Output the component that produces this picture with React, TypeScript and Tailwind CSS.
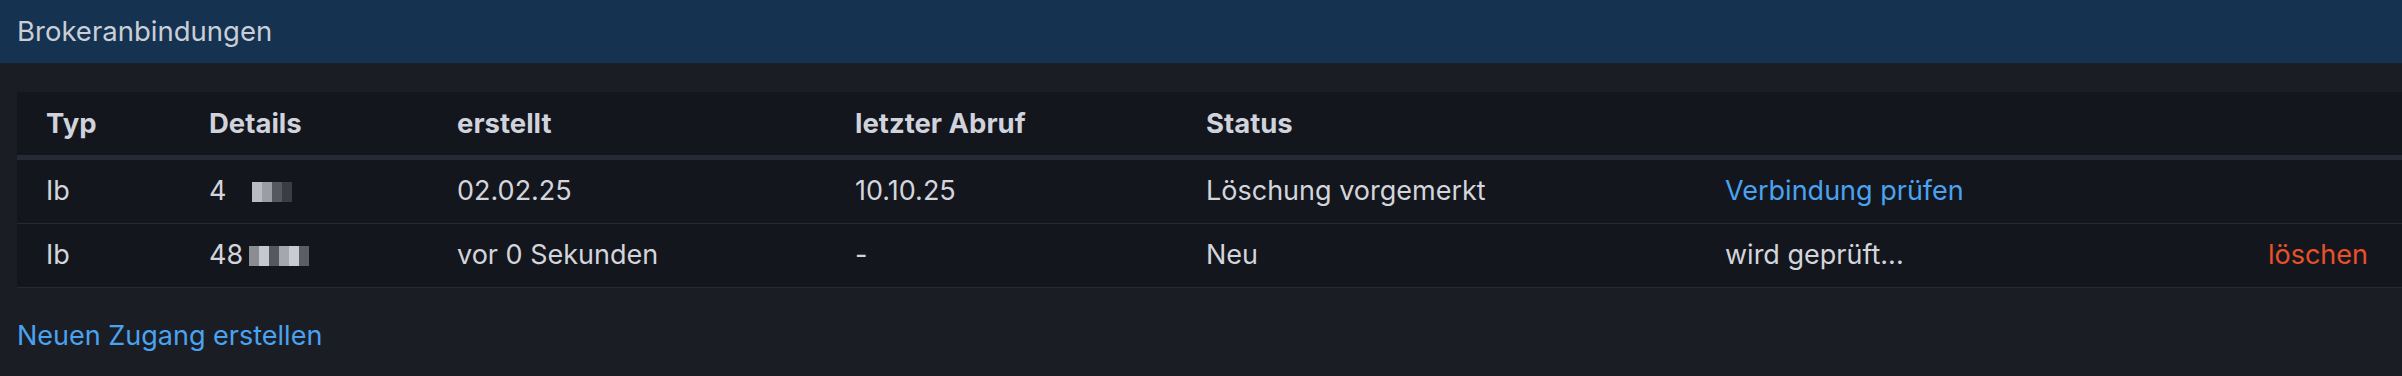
const cols = "grid grid-cols-[163px_248px_398px_351px_519px_1fr_auto] items-center";

type Row = {
  typ: string;
  details: string;
  created: string;
  lastFetch: string;
  status: string;
  action: { text: string; tone: "link" | "muted" };
  deletable?: boolean;
};

const rows: Row[] = [
  {
    typ: "Ib",
    details: "4",
    created: "02.02.25",
    lastFetch: "10.10.25",
    status: "Löschung vorgemerkt",
    action: { text: "Verbindung prüfen", tone: "link" },
  },
  {
    typ: "Ib",
    details: "48",
    created: "vor 0 Sekunden",
    lastFetch: "-",
    status: "Neu",
    action: { text: "wird geprüft...", tone: "muted" },
    deletable: true,
  },
];

// pixelated blur standing in for the masked account number
function Masked({ cells }: { cells: string[] }) {
  return (
    <span className="ml-[6px] inline-flex h-[20px]">
      {cells.map((c, i) => (
        <span key={i} className="h-full w-[10px]" style={{ backgroundColor: c }} />
      ))}
    </span>
  );
}

export default function App() {
  return (
    <div className="min-h-[376px] bg-[#1b1d25] font-['Inter','Liberation_Sans',sans-serif] text-[27px] text-[#d3d5db]">
      {/* Title bar */}
      <div className="flex h-[63px] items-center bg-[#153250] px-[17px]">
        <h1 className="text-[27.5px] text-[#c9ced8]">Brokeranbindungen</h1>
      </div>

      <div className="pl-[17px] pt-[29px]">
        <div className="bg-[#14161e]">
          {/* Header row */}
          <div className={`${cols} h-[68px] border-b-[5px] border-[#262a35] pl-[29px] text-[27.5px] font-bold text-[#d0d3db]`}>
            <div>Typ</div>
            <div>Details</div>
            <div>erstellt</div>
            <div>letzter Abruf</div>
            <div>Status</div>
            <div />
            <div />
          </div>

          {rows.map((r, i) => (
            <div
              key={i}
              className={`${cols} h-[64px] border-b border-[#262a35] pl-[29px] pr-[34px]`}
            >
              <div>{r.typ}</div>
              <div className="flex items-center">
                <span>{r.details}</span>
                {i === 0 ? (
                  <Masked cells={["#14161e", "#14161e", "#b9bcc4", "#9a9da6", "#55585f", "#3a3d44"]} />
                ) : (
                  <Masked cells={["#8a8d94", "#c6c8ce", "#55585f", "#a4a7ae", "#c9cbd1", "#5b5e66"]} />
                )}
              </div>
              <div>{r.created}</div>
              <div>{r.lastFetch}</div>
              <div>{r.status}</div>
              <div className={r.action.tone === "link" ? "text-[#4aa3f0]" : ""}>{r.action.text}</div>
              <div className="text-right text-[#e8512a]">{r.deletable ? "löschen" : ""}</div>
            </div>
          ))}
        </div>

        <div className="pt-[28px] text-[#4aa3f0]">Neuen Zugang erstellen</div>
      </div>
    </div>
  );
}
